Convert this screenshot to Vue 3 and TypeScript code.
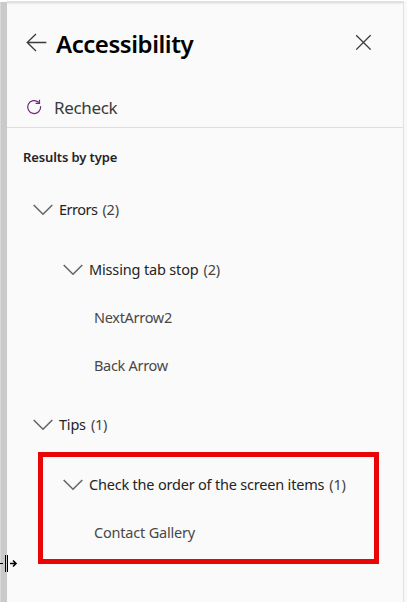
<script setup lang="ts">
interface Rule {
  id: string
  title: string
  count: number
  items: { id: string; name: string }[]
  highlighted?: boolean
}

interface Category {
  id: string
  title: string
  count: number
  rule: Rule
}

const categories: Category[] = [
  {
    id: 'errors',
    title: 'Errors',
    count: 2,
    rule: {
      id: 'missing',
      title: 'Missing tab stop',
      count: 2,
      items: [
        { id: 'next', name: 'NextArrow2' },
        { id: 'back-arrow', name: 'Back Arrow' },
      ],
    },
  },
  {
    id: 'tips',
    title: 'Tips',
    count: 1,
    rule: {
      id: 'order',
      title: 'Check the order of the screen items',
      count: 1,
      items: [{ id: 'contact', name: 'Contact Gallery' }],
      highlighted: true,
    },
  },
]
</script>

<template>
  <div class="screen">
    <div class="splitter"></div>
    <main class="panel">
      <header class="header">
        <svg class="back" width="22" height="20" viewBox="0 0 22 20">
          <path d="M20.3 10.5H1.2M10 2L1.2 10.5L10 19" />
        </svg>
        <h1 class="title">Accessibility</h1>
        <svg class="close" width="16" height="16" viewBox="0 0 16 16">
          <path d="M1.2 1.2L15.6 15.6M15.6 1.2L1.2 15.6" />
        </svg>
      </header>

      <div class="toolbar">
        <svg class="refresh" width="16" height="16" viewBox="0 0 16 16">
          <path d="M12.6 3.3A6.5 6.5 0 1 0 14.6 7.2M13.5 0.8V4.3H9.6" />
        </svg>
        <span class="recheck">Recheck</span>
      </div>

      <h2 class="subtitle">Results by type</h2>

      <section v-for="category in categories" :key="category.id" class="category">
        <div class="row root">
          <svg class="chevron" width="20" height="12" viewBox="0 0 20 12">
            <path d="M0.7 1L10 10.2L19.3 1" />
          </svg>
          <span :class="['label', category.id]">{{ category.title }}</span>
          <span class="count">({{ category.count }})</span>
        </div>
        <div class="group">
          <div class="row rule">
            <svg class="chevron" width="20" height="12" viewBox="0 0 20 12">
              <path d="M0.7 1L10 10.2L19.3 1" />
            </svg>
            <span :class="['label', category.rule.id]">{{ category.rule.title }}</span>
            <span class="count">({{ category.rule.count }})</span>
          </div>
          <div v-for="item in category.rule.items" :key="item.id" class="row item">
            <span :class="['name', item.id]">{{ item.name }}</span>
          </div>
          <div v-if="category.rule.highlighted" class="highlight"></div>
        </div>
      </section>
    </main>
    <div class="edge"></div>
    <svg class="cursor" width="18" height="17" viewBox="0 0 18 17">
      <path class="bars" d="M5.5 0V17M7.5 0V17M0 8.5H3" />
      <path class="arrow" d="M10 8.5H16M13 5.5L16 8.5L13 11.5" />
    </svg>
  </div>
</template>

<style>
body {
  background: #fafafa;
}
</style>

<style scoped>
.screen {
  position: relative;
  display: flex;
  box-sizing: border-box;
  height: 602px;
  overflow: hidden;
  border-top: 1px solid #fff;
  background: #fafafa;
  font-family: "Noto Sans", "Open Sans", sans-serif;
  color: #242424;
}

.splitter {
  box-sizing: border-box;
  flex: none;
  width: 7px;
  margin-top: 1px;
  border-left: 1px solid #d8d8d8;
  background: #cacaca;
}

.panel {
  flex: 1;
  min-width: 0;
  border-top: 2px solid #dfe0df;
  box-shadow: inset 0 2px 2px -1px #eaeaea;
}

.edge {
  box-sizing: border-box;
  flex: none;
  width: 4px;
  border-left: 1px solid #e2e2e2;
  background: #f8f8f8;
}

svg {
  display: block;
  flex: none;
  fill: none;
}

.header {
  display: flex;
  align-items: center;
  height: 78px;
  padding: 0 32px 0 19px;
}

.back,
.close {
  stroke: #3b3b3b;
  stroke-width: 1.3;
}

.title {
  flex: 1;
  margin: 3px 0 0 8px;
  color: #000;
  font-size: 24px;
  font-weight: 600;
  line-height: 34px;
  letter-spacing: -0.45px;
}

.toolbar {
  display: flex;
  align-items: center;
  box-sizing: border-box;
  height: 47px;
  padding: 6px 0 0 19px;
  border-bottom: 1px solid #dfdfdf;
}

.refresh {
  stroke: #742774;
  stroke-width: 1.2;
}

.recheck {
  margin-left: 12px;
  padding-top: 1px;
  color: #3a3a3a;
  font-size: 17px;
  line-height: 24px;
  letter-spacing: -0.35px;
}

.subtitle {
  margin: 19px 0 0 16px;
  font-size: 13px;
  font-weight: 600;
  line-height: 20px;
  letter-spacing: -0.12px;
}

.category {
  margin-top: 11px;
}

.subtitle + .category {
  margin-top: 19px;
}

.group {
  position: relative;
  margin-top: 12px;
}

.row {
  display: flex;
  align-items: center;
  height: 48px;
  font-size: 14.5px;
  line-height: 20px;
  white-space: nowrap;
}

.root {
  padding-left: 26px;
}

.rule {
  padding-left: 56px;
}

.item {
  padding-left: 87px;
  color: #484848;
}

.chevron {
  stroke: #666;
  stroke-width: 1.6;
}

.label,
.count,
.name {
  padding-bottom: 2px;
}

.label {
  margin-left: 6px;
  letter-spacing: -0.2px;
}

.missing {
  letter-spacing: -0.16px;
}

.errors {
  letter-spacing: -0.5px;
}

.count {
  margin-left: 5px;
  color: #444;
  letter-spacing: -0.2px;
}

.name {
  letter-spacing: -0.3px;
}

.contact {
  letter-spacing: -0.2px;
}

.highlight {
  position: absolute;
  top: -9px;
  left: 31px;
  box-sizing: border-box;
  width: 341px;
  height: 112px;
  border: 5px solid #e90606;
}

.cursor {
  position: absolute;
  top: 554px;
  left: 0;
  stroke: #000;
}

.arrow {
  stroke-width: 1.6;
}
</style>
